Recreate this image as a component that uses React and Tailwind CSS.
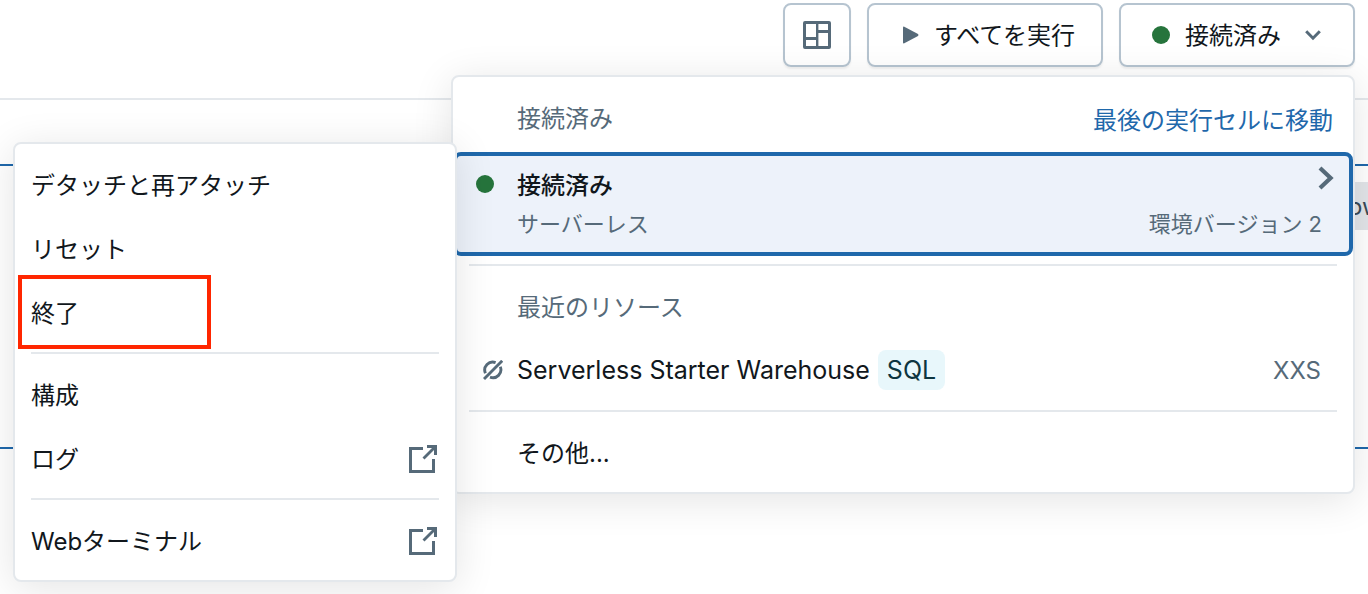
import React from 'react';

const LayoutIcon = () => (
  <svg className="size-7" viewBox="0 0 28 28" fill="none" stroke="currentColor" strokeWidth="3" aria-hidden="true">
    <rect x="1.5" y="1.5" width="25" height="25" rx="0.5" />
    <path d="M14.2 1.5v25" strokeWidth="2.4" />
    <path d="M1.5 17.6h12.5M14 10.5h12.5" />
  </svg>
);

const PlayIcon = () => (
  <svg className="h-[18px] w-4" viewBox="0 0 16 18" fill="currentColor" aria-hidden="true">
    <path d="M0 1.6Q0 .2 1.3.7L15 8.1q1 .9 0 1.8L1.3 17.3Q0 17.8 0 16.4Z" />
  </svg>
);

const ChevronDown = () => (
  <svg className="h-[11px] w-4" viewBox="0 0 16 11" fill="none" stroke="currentColor" strokeWidth="3" aria-hidden="true">
    <path d="M1.2 1.3 8 8.2l6.8-6.9" />
  </svg>
);

const ChevronRight = () => (
  <svg className="h-6 w-4" viewBox="0 0 16 24" fill="none" stroke="currentColor" strokeWidth="4.2" aria-hidden="true">
    <path d="M2 2 12.6 12 2 22" />
  </svg>
);

const ExternalIcon = () => (
  <svg className="size-7" viewBox="0 0 28 28" fill="none" stroke="currentColor" strokeWidth="3" aria-hidden="true">
    <path d="M14 3.5H1.5v23h23V14" />
    <path d="M18 1.5h8.5V10" />
    <path d="M14.5 13.5 26 2" strokeWidth="2.8" />
  </svg>
);

const StoppedIcon = () => (
  <svg className="size-5" viewBox="0 0 20 20" fill="none" stroke="currentColor" strokeWidth="2.9" aria-hidden="true">
    <path d="M1 19 19.2.8" />
    <path d="M2.4 13.2A8 8 0 0 1 12.6 2.6" />
    <path d="M17.3 6.8A8 8 0 0 1 7 17.2" />
  </svg>
);

const Dot = () => <span className="size-[18px] shrink-0 rounded-full bg-[#26743c]" />;
const Divider = () => <hr className="mx-4 my-2 border-0 border-t-2 border-[#e4e8ec]" />;

const buttonStyle =
  'flex h-16 items-center rounded-lg border-2 border-[#b6c4d0] bg-white/60 shadow-[0_2px_2px_rgba(0,0,0,0.06)]';
const panelStyle =
  'absolute rounded-lg border-2 border-[#e4e8ec] bg-white shadow-[0_6px_40px_rgba(0,0,0,0.11)]';

function MenuItem({ children, external }) {
  return (
    <button type="button" role="menuitem" className="flex h-16 w-full items-center justify-between pt-0.5 pr-[18px] pl-4 text-left">
      <span className="pt-0.5">{children}</span>
      {external && <span className="text-[#566a79]"><ExternalIcon /></span>}
    </button>
  );
}

function ActionsMenu() {
  return (
    <div role="menu" aria-label="接続済み" className={`${panelStyle} top-[65px] right-full -mr-1 w-[444px] py-2`}>
      <MenuItem>デタッチと再アタッチ</MenuItem>
      <MenuItem>リセット</MenuItem>
      <div className="relative">
        <MenuItem>終了</MenuItem>
        <span className="pointer-events-none absolute -top-[5px] left-[3px] h-[74px] w-[193px] border-4 border-[#ff2600]" />
      </div>
      <Divider />
      <MenuItem>構成</MenuItem>
      <MenuItem external>ログ</MenuItem>
      <Divider />
      <MenuItem external>Webターミナル</MenuItem>
    </div>
  );
}

function ResourceMenu() {
  return (
    <div className={`${panelStyle} top-full right-0 z-10 mt-2 w-[904px] pb-2`}>
      <div className="flex h-[75px] items-center justify-between pt-2 pr-5 pl-16 text-[#566a79]">
        <h2>接続済み</h2>
        <a href="#last-cell" className="pt-1 text-[#1f68ab]">最後の実行セルに移動</a>
      </div>
      <button type="button" className="flex h-[104px] w-full items-start rounded-lg border-4 border-[#1f68ab] bg-[#edf2fa] pt-2 pr-[15px] pl-[19px] text-left">
        <span className="flex h-10 w-[41px] shrink-0 items-center"><Dot /></span>
        <span className="flex grow flex-col">
          <span className="flex h-10 justify-between">
            <span className="pt-0.5 font-medium leading-10">接続済み</span>
            <span className="pt-0.5 text-[#566a79]"><ChevronRight /></span>
          </span>
          <span className="flex justify-between pr-3 text-[22px] leading-10 text-[#566a79]">
            <span>サーバーレス</span>
            <span>環境バージョン 2</span>
          </span>
        </span>
      </button>
      <Divider />
      <h2 className="flex h-16 items-center pt-1 pl-16 text-[#566a79]">最近のリソース</h2>
      <button type="button" className="flex h-16 w-full items-center pr-8 pl-[30px] text-left">
        <span className="w-[34px] shrink-0 text-[#566a79]"><StoppedIcon /></span>
        <span className="pt-0.5 text-[25px]">Serverless Starter Warehouse</span>
        <span className="ml-2 flex h-10 items-center rounded-lg bg-[#e8f7fb] px-[9px] pt-0.5 text-[25px] text-[#0c3540]">SQL</span>
        <span className="ml-auto pt-0.5 text-[#566a79]">XXS</span>
      </button>
      <Divider />
      <button type="button" className="flex h-16 w-full items-center pt-1 pl-16 text-left">その他...</button>
      <ActionsMenu />
    </div>
  );
}

export default function App() {
  return (
    <div className="min-h-screen overflow-hidden bg-white font-['Inter','Noto_Sans_CJK_JP',sans-serif] text-2xl text-[#11171c]">
      <header className="flex h-[100px] items-start justify-end gap-4 border-b-2 border-[#e4e8ec] pt-[3px] pr-[13px]">
        <button type="button" aria-label="レイアウト" className={`${buttonStyle} w-[68px] justify-center text-[#566a79]`}>
          <LayoutIcon />
        </button>
        <button type="button" className={`${buttonStyle} w-[236px] gap-[15px] pl-[34px]`}>
          <span className="text-[#566a79]"><PlayIcon /></span>
          <span className="pt-0.5">すべてを実行</span>
        </button>
        <div className="relative">
          <button type="button" aria-expanded="true" className={`${buttonStyle} w-[236px] pl-[31px]`}>
            <Dot />
            <span className="ml-[15px] pt-0.5">接続済み</span>
            <span className="ml-6 text-[#566a79]"><ChevronDown /></span>
          </button>
          <ResourceMenu />
        </div>
      </header>
      <main className="pt-16">
        <section className="flex h-[285px] justify-end border-y-2 border-[#1f68ab] pt-4">
          <span className="h-12 w-6 overflow-hidden bg-[#e2e5e9] pl-1 leading-[50px] text-[#3a4a57]">ow</span>
        </section>
      </main>
    </div>
  );
}
